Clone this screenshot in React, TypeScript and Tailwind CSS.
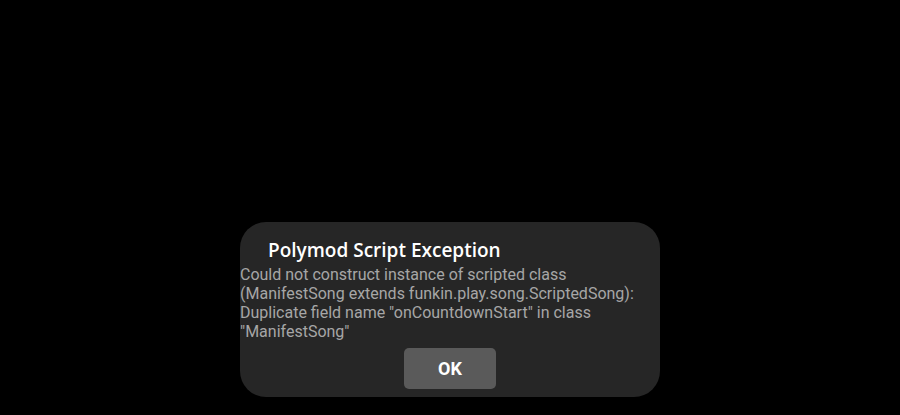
export default function App() {
  return (
    <div className="w-[900px] h-[415px] bg-black flex justify-center items-end pb-[18px]">
      <div className="w-[420px] h-[175px] bg-[#262626] rounded-[26px] flex flex-col">
        <div
          className="pl-[28px] pt-[16px] text-[19px] leading-[24px] font-semibold text-white"
          style={{ fontFamily: '"Open Sans", sans-serif' }}
        >
          Polymod Script Exception
        </div>
        <div
          className="mt-[3px] text-[16px] leading-[19px] text-[#a6a6a6]"
          style={{ fontFamily: 'Roboto, sans-serif' }}
        >
          Could not construct instance of scripted class
          <br />
          (ManifestSong extends funkin.play.song.ScriptedSong):
          <br />
          Duplicate field name "onCountdownStart" in class
          <br />
          "ManifestSong"
        </div>
        <div className="flex justify-center mt-[7px]">
          <button
            className="w-[92px] h-[41px] rounded-[5px] bg-[#5a5a5a] text-white text-[18px] font-bold"
            style={{ fontFamily: 'Roboto, sans-serif' }}
          >
            OK
          </button>
        </div>
      </div>
    </div>
  );
}
